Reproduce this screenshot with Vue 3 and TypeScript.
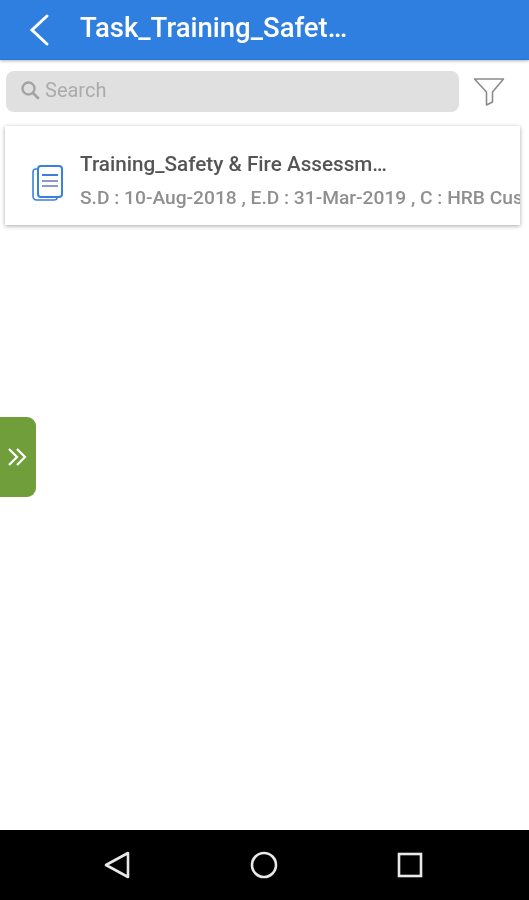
<script setup lang="ts">
const title = 'Task_Training_Safet…'
const rowTitle = 'Training_Safety & Fire Assessm…'
const rowMeta = 'S.D : 10-Aug-2018 , E.D : 31-Mar-2019 , C : HRB Cus'
</script>

<template>
  <div class="screen">
    <header class="topbar">
      <svg class="back" width="24" height="34" viewBox="0 0 24 34" fill="none">
        <path d="M20 3 L5 17 L20 31" stroke="#fff" stroke-width="3" stroke-linecap="round" stroke-linejoin="miter" />
      </svg>
      <h1 class="title">{{ title }}</h1>
    </header>

    <div class="searchrow">
      <div class="search">
        <svg width="20" height="20" viewBox="0 0 20 20" fill="none">
          <circle cx="8.5" cy="8.5" r="6" stroke="#a3a3a3" stroke-width="2.4" />
          <path d="M13 13 L18 18" stroke="#a3a3a3" stroke-width="2.8" stroke-linecap="round" />
        </svg>
        <span class="placeholder">Search</span>
      </div>
      <svg class="filter" width="32" height="30" viewBox="0 0 32 30" fill="none">
        <path d="M1.5 2 H30.5 L19.5 15 V25 L13.5 28 V15 Z" stroke="#8a8a8a" stroke-width="1.6" stroke-linejoin="round" />
      </svg>
    </div>

    <section class="card">
      <svg class="doc" width="32" height="36" viewBox="0 0 32 36" fill="none">
        <path d="M6 4 H4 Q1 4 1 7 V31 Q1 35 5 35 H22 Q25 35 25 33" stroke="#3a80df" stroke-width="1.6" />
        <rect x="6" y="1" width="24" height="31" rx="3" fill="#fff" stroke="#3a80df" stroke-width="2" />
        <path d="M10 10 H26" stroke="#3a80df" stroke-width="2" />
        <path d="M10 16 H26 M10 21 H26" stroke="#8a9ad0" stroke-width="2" />
      </svg>
      <div class="text">
        <div class="rowtitle">{{ rowTitle }}</div>
        <div class="rowmeta">{{ rowMeta }}</div>
      </div>
    </section>

    <main class="body">
      <button class="drawer" type="button" aria-label="Open">
        <svg width="20" height="20" viewBox="0 0 20 20" fill="none">
          <path d="M1 2 L9 10 L1 18 M9 2 L17 10 L9 18" stroke="#fff" stroke-width="2.2" />
        </svg>
      </button>
    </main>

    <nav class="navbar">
      <svg width="28" height="28" viewBox="0 0 28 28" fill="none">
        <path d="M3 14 L25 2 V26 Z" stroke="#e8e8e8" stroke-width="2.6" stroke-linejoin="round" />
      </svg>
      <svg width="28" height="28" viewBox="0 0 28 28" fill="none">
        <circle cx="14" cy="14" r="12" stroke="#e8e8e8" stroke-width="2.6" />
      </svg>
      <svg width="26" height="26" viewBox="0 0 26 26" fill="none">
        <rect x="2" y="2" width="22" height="22" stroke="#e8e8e8" stroke-width="2.6" />
      </svg>
    </nav>
  </div>
</template>

<style>
html, body { margin: 0; background: #fff; }
</style>

<style scoped>
.screen {
  width: 529px;
  height: 900px;
  display: flex;
  flex-direction: column;
  overflow: hidden;
  font-family: Roboto, "Liberation Sans", sans-serif;
  background: #fff;
  filter: blur(0.45px);
}
.topbar {
  height: 60px;
  flex: none;
  box-sizing: border-box;
  padding: 0 0 5px 27px;
  display: flex;
  align-items: center;
  background: #2f7fe0;
  border-bottom: 1px solid #1f76dc;
  box-shadow: 0 1px 3px rgba(0, 0, 0, 0.3);
}
.back { flex: none; margin-top: 5px; }
.title {
  margin: 0 0 0 29px;
  font-size: 27.5px;
  font-weight: 500;
  color: #fff;
  white-space: nowrap;
}
.searchrow {
  flex: none;
  display: flex;
  align-items: center;
  margin-top: 11px;
  padding-left: 6px;
}
.search {
  width: 453px;
  height: 41px;
  box-sizing: border-box;
  padding: 0 0 3px 14px;
  display: flex;
  align-items: center;
  gap: 5px;
  border-radius: 8px;
  background: #e0e0e0;
}
.placeholder {
  font-size: 20px;
  color: #ababab;
}
.filter { margin-left: 14px; }
.card {
  flex: none;
  width: 515px;
  height: 99px;
  margin: 14px 0 0 5px;
  box-sizing: border-box;
  padding-left: 27px;
  display: flex;
  align-items: center;
  overflow: hidden;
  background: #fff;
  box-shadow: 0 1px 4px rgba(0, 0, 0, 0.35);
}
.doc { flex: none; margin-top: 14px; }
.text { margin: 10px 0 0 16px; min-width: 0; white-space: nowrap; }
.rowtitle {
  font-size: 20.7px;
  font-weight: 500;
  color: #555;
  line-height: 24px;
}
.rowmeta {
  margin-top: 11px;
  font-size: 19.2px;
  font-weight: 500;
  color: #8f8f8f;
  line-height: 22px;
}
.body {
  flex: 1;
  position: relative;
}
.drawer {
  position: absolute;
  left: 0;
  top: 192px;
  width: 36px;
  height: 80px;
  padding: 0;
  border: 0;
  border-radius: 0 9px 9px 0;
  background: #6f9e3a;
  display: flex;
  align-items: center;
  justify-content: center;
}
.navbar {
  flex: none;
  height: 70px;
  box-sizing: border-box;
  padding-right: 3px;
  display: flex;
  align-items: center;
  justify-content: center;
  gap: 119px;
  background: #000;
}
</style>
